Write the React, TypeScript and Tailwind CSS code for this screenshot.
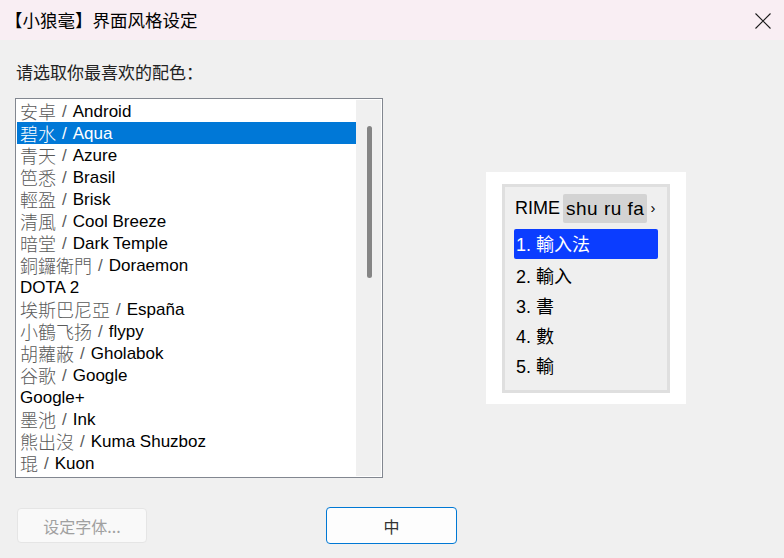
const schemes: [string | null, string][] = [
  ["安卓", "Android"],
  ["碧水", "Aqua"],
  ["青天", "Azure"],
  ["笆悉", "Brasil"],
  ["輕盈", "Brisk"],
  ["清風", "Cool Breeze"],
  ["暗堂", "Dark Temple"],
  ["銅鑼衛門", "Doraemon"],
  [null, "DOTA 2"],
  ["埃斯巴尼亞", "España"],
  ["小鶴飞扬", "flypy"],
  ["胡蘿蔽", "Gholabok"],
  ["谷歌", "Google"],
  [null, "Google+"],
  ["墨池", "Ink"],
  ["熊出沒", "Kuma Shuzboz"],
  ["琨", "Kuon"],
];

const candidates = ["輸入法", "輸入", "書", "數", "輸"];

const font = "font-['Liberation_Sans','Noto_Sans_CJK_SC',sans-serif]";
const cjk = "font-['Noto_Sans_CJK_SC',sans-serif]";

export default function App() {
  return (
    <div className={`w-[784px] h-[558px] bg-[#f0f0f0] flex flex-col ${font}`}>
      {/* title bar */}
      <div className="h-10 bg-[#f9eef3] flex items-center justify-between pl-[5px] pr-[13px]">
        <span className={`text-[17.5px] text-black ${cjk}`}>【小狼毫】界面风格设定</span>
        <svg width="16" height="16" viewBox="0 0 16 16" className="mt-[1px]">
          <path d="M0.5 0.5 L15.5 15.5 M15.5 0.5 L0.5 15.5" stroke="#1a1a1a" strokeWidth="1.1" fill="none" />
        </svg>
      </div>

      <div className="px-[15px] pt-[21px]">
        <p className={`text-[17px] leading-[22px] text-[#222] pl-px ${cjk}`}>请选取你最喜欢的配色：</p>

        <div className="mt-[15px] flex items-center">
          {/* scheme list */}
          <div className="w-[368px] h-[380px] border border-[#828790] bg-white flex p-px">
            <div className="flex-1 flex flex-col">
              {schemes.map(([zh, en], i) => (
                <div
                  key={en}
                  className={`h-[22px] flex items-center pl-[3px] text-[17px] leading-none whitespace-nowrap ${i === 1 ? "bg-[#0078d7] text-white" : "text-black"}`}
                >
                  {zh && (
                    <>
                      <span className={`${cjk} font-light text-[18px] ${i === 1 ? "text-white" : "text-[#5a5a5a]"}`}>{zh}</span>
                      <span className={`mx-[6px] ${i === 1 ? "text-white" : "text-[#5a5a5a]"}`}>/</span>
                    </>
                  )}
                  <span>{en}</span>
                </div>
              ))}
            </div>
            <div className="w-[25px] bg-[#f0f0f0] flex justify-center pt-[26px] pl-px">
              <div className="w-[5px] h-[152px] rounded-full bg-[#858585]" />
            </div>
          </div>

          {/* preview */}
          <div className="ml-[103px] w-[200px] h-[232px] bg-white flex items-center justify-center">
            <div className="w-[168px] h-[209px] border-[3px] border-[#dfdfdf] bg-[#efefef] pt-[7px] px-[9px] text-[18px] text-black">
              <div className="flex items-center h-[29px]">
                <span className="pl-[1px]">RIME</span>
                <span className="ml-[3px] bg-[#d3d3d3] rounded-[2px] px-[3px] h-[29px] leading-[29px] text-[19px] tracking-[0.5px]">shu ru fa</span>
                <span className="ml-[3px] text-[15px]">›</span>
              </div>
              <div className="mt-[6px] flex flex-col">
                {candidates.map((c, i) => (
                  <div
                    key={c}
                    className={`h-[30px] leading-[29px] pl-[2px] ${i === 0 ? "bg-[#0b3dff] text-white rounded-[2px] h-[28px] mb-[2px]" : ""}`}
                  >
                    {i + 1}. <span className={cjk}>{c}</span>
                  </div>
                ))}
              </div>
            </div>
          </div>
        </div>

        {/* buttons */}
        <div className="mt-[29px] flex items-center">
          <button className={`ml-[2px] w-[130px] h-[35px] rounded-[4px] border border-[#e5e5e5] bg-[#f9f9f9] text-[16px] text-[#a0a0a0] ${cjk}`}>
            设定字体...
          </button>
          <button className={`ml-[179px] w-[131px] h-[37px] rounded-[4px] border-[1.5px] border-[#0078d4] bg-[#fdfdfd] text-[16px] text-[#333] ${cjk}`}>
            中
          </button>
        </div>
      </div>
    </div>
  );
}
